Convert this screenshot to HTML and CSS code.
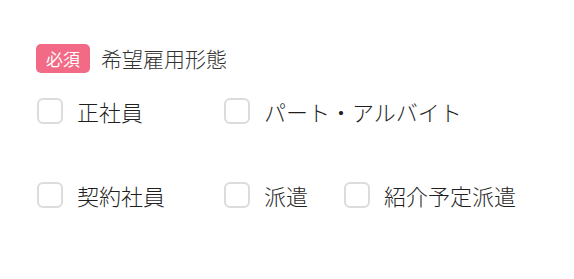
FILE: index.html
```html
<!DOCTYPE html>
<html lang="ja">
<head>
<meta charset="utf-8">
<link rel="stylesheet" href="styles.css">
</head>
<body>
<div class="field">
  <div class="label-row">
    <span class="badge">必須</span>
    <span class="label">希望雇用形態</span>
  </div>
  <div class="options">
    <label class="opt c1"><span class="box"></span><span class="txt">正社員</span></label>
    <label class="opt c2 span"><span class="box"></span><span class="txt">パート・アルバイト</span></label>
    <label class="opt c1"><span class="box"></span><span class="txt">契約社員</span></label>
    <label class="opt c2"><span class="box"></span><span class="txt">派遣</span></label>
    <label class="opt c3"><span class="box"></span><span class="txt">紹介予定派遣</span></label>
  </div>
</div>
</body>
</html>
```
FILE: styles.css
```css
html, body {
  margin: 0;
  padding: 0;
  background: #fff;
}
body {
  font-family: "Noto Sans CJK JP", "Noto Sans", sans-serif;
  font-weight: 300;
  color: #333;
}
.field {
  padding: 44px 0 0 36px;
}
.label-row {
  display: flex;
  align-items: center;
  gap: 11px;
  height: 29px;
}
.badge {
  display: flex;
  align-items: center;
  justify-content: center;
  width: 54px;
  height: 29px;
  border-radius: 5px;
  background: #f26a85;
  color: #fff;
  font-size: 17px;
  font-weight: 400;
  line-height: 1;
}
.label {
  font-size: 21px;
  line-height: 29px;
  color: #333;
}
.options {
  display: grid;
  grid-template-columns: 187px 120px auto;
  row-gap: 58px;
  margin-top: 25px;
  padding-left: 1px;
}
.span {
  grid-column: 2 / 4;
}
.opt {
  display: flex;
  align-items: center;
  gap: 14px;
  height: 26px;
}
.box {
  box-sizing: border-box;
  width: 26px;
  height: 26px;
  border: 2px solid #dcdcdc;
  border-radius: 6px;
  background: #fff;
  flex: none;
}
.txt {
  font-size: 22px;
  line-height: 26px;
  color: #1f1f1f;
}
```
